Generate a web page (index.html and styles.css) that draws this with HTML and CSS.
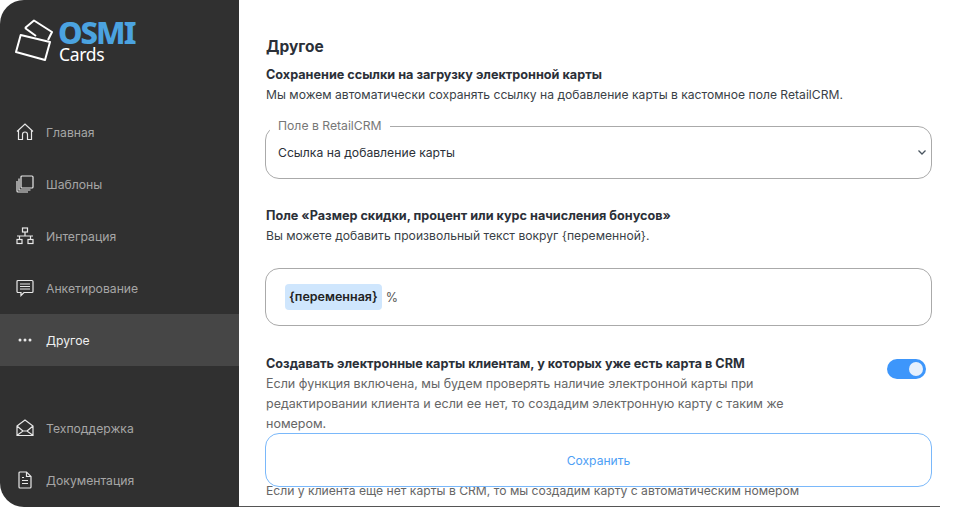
FILE: index.html
```html
<!DOCTYPE html>
<html lang="ru">
<head>
  <meta charset="UTF-8" />
  <meta name="viewport" content="width=device-width, initial-scale=1.0" />
  <title>OSMI Cards</title>
  <link rel="stylesheet" href="styles.css">
</head>
<body>
  <div class="app">
    <aside class="sidebar">
      <div class="logo">
        <svg class="logo-icon" width="38" height="42" viewBox="0 0 38 42" fill="none" stroke="#fff" stroke-width="2" stroke-linejoin="round">
          <path d="M10 9L19 1.500 37 13 33 21"/>
          <path d="M10 9l11 8"/>
          <path d="M5.700 16L35 23 30 41 1 33z"/>
        </svg>
        <div class="logo-text">
          <div class="logo-name">OSMI</div>
          <div class="logo-sub">Cards</div>
        </div>
      </div>
      <nav class="nav">
        <a class="nav-item">
          <svg class="nav-icon" viewBox="0 0 18 18"><path d="M1 8.500L9 1l8 7.500M2.500 7.500V16.500H6.500V11.500a2.500 2.500 0 0 1 5 0V16.500H15.500V7.500"/></svg>
          <span>Главная</span>
        </a>
        <a class="nav-item">
          <svg class="nav-icon" viewBox="0 0 18 18"><rect x="5" y="1" width="12" height="12" rx="1"/><path d="M3 3.500V15h11.500M1 6v10a1 1 0 0 0 1 1h10"/></svg>
          <span>Шаблоны</span>
        </a>
        <a class="nav-item">
          <svg class="nav-icon" viewBox="0 0 18 18"><rect x="6.500" y="1" width="5" height="4"/><rect x="1" y="12.500" width="5" height="4"/><rect x="12" y="12.500" width="5" height="4"/><path d="M9 5v4M3.500 12.500V9h11v3.500M9 9H1M9 9h8"/></svg>
          <span>Интеграция</span>
        </a>
        <a class="nav-item">
          <svg class="nav-icon" viewBox="0 0 18 18"><path d="M2 1.500h14a1 1 0 0 1 1 1v10a1 1 0 0 1-1 1H8l-3 3v-3H2a1 1 0 0 1-1-1v-10a1 1 0 0 1 1-1z"/><path d="M4 5h10M4 7.500h10M4 10h10"/></svg>
          <span>Анкетирование</span>
        </a>
        <a class="nav-item active">
          <svg class="nav-icon dots" viewBox="0 0 18 18"><circle cx="4" cy="9" r="1.500"/><circle cx="9" cy="9" r="1.500"/><circle cx="14" cy="9" r="1.500"/></svg>
          <span>Другое</span>
        </a>
        <a class="nav-item nav-gap">
          <svg class="nav-icon" viewBox="0 0 18 18"><path d="M1 7L9 1l8 6v9.500H1zM1 7l6 5M17 7l-6 5M1.500 16l5.500-4h4l5.500 4"/></svg>
          <span>Техподдержка</span>
        </a>
        <a class="nav-item">
          <svg class="nav-icon" viewBox="0 0 18 18"><path d="M3 2a1 1 0 0 1 1-1h6.500L15 5.500V16a1 1 0 0 1-1 1H4a1 1 0 0 1-1-1z"/><path d="M10.500 1v4.500H15M6 6.500h2M6 9.500h6M6 12.500h6"/></svg>
          <span>Документация</span>
        </a>
      </nav>
    </aside>

    <main class="main">
      <h1 class="page-title">Другое</h1>

      <section class="block">
        <h2 class="block-title">Сохранение ссылки на загрузку электронной карты</h2>
        <p class="block-text">Мы можем автоматически сохранять ссылку на добавление карты в кастомное поле RetailCRM.</p>
        <fieldset class="field">
          <legend>Поле в RetailCRM</legend>
          <div class="select">
            <span>Ссылка на добавление карты</span>
            <svg width="8" height="5" viewBox="0 0 8 5" fill="none" stroke="#4a5560" stroke-width="1.300"><path d="M.5.500L4 4 7.500.500"/></svg>
          </div>
        </fieldset>
      </section>

      <section class="block discount">
        <h2 class="block-title">Поле «Размер скидки, процент или курс начисления бонусов»</h2>
        <p class="block-text">Вы можете добавить произвольный текст вокруг {переменной}.</p>
        <div class="template-box">
          <span class="chip">{переменная}</span>
          <span class="template-rest">%</span>
        </div>
      </section>

      <section class="block existing">
        <div class="switch-row">
          <div>
            <h2 class="block-title">Создавать электронные карты клиентам, у которых уже есть карта в CRM</h2>
            <p class="block-note">Если функция включена, мы будем проверять наличие электронной карты при редактировании клиента и если ее нет, то создадим электронную карту с таким же номером.</p>
          </div>
          <div class="toggle"><div class="toggle-knob"></div></div>
        </div>
        <p class="block-note wide">Если у клиента еще нет карты в CRM, то мы создадим карту с автоматическим номером</p>
      </section>

      <button class="save-btn">Сохранить</button>
    </main>
  </div>
</body>
</html>
```

FILE: styles.css
```css
* {
  box-sizing: border-box;
}
body {
  margin: 0;
  font-family: Inter, "Liberation Sans", sans-serif;
  background-color: white;
  color: #2b3038;
}
.app {
  display: flex;
  width: 960px;
  height: 507px;
  overflow: hidden;
}

/* sidebar */
.sidebar {
  width: 239px;
  height: 507px;
  flex-shrink: 0;
  background-color: #303030;
  border-radius: 24px 0 0 24px;
}
.logo {
  display: flex;
  height: 106px;
  padding: 19px 0 0 15px;
}
.logo-icon {
  margin-right: 5px;
}
.logo-text {
  color: white;
}
.logo-name {
  font-family: "Noto Sans", sans-serif;
  font-size: 31px;
  font-weight: 800;
  line-height: 27px;
  letter-spacing: -2px;
  color: #4ba3e0;
}
.logo-sub {
  font-family: "Noto Sans", sans-serif;
  font-size: 17.500px;
  line-height: 17px;
  letter-spacing: -0.300px;
  margin-left: 1px;
}
.nav {
  display: flex;
  flex-direction: column;
}
.nav-item {
  display: flex;
  align-items: center;
  height: 52px;
  padding-left: 16px;
  font-size: 12.200px;
  color: #a6a6a6;
}
.nav-item.active {
  background-color: #464646;
  color: #f0f0f0;
}
.nav-gap {
  margin-top: 36px;
}
.nav-icon {
  width: 18px;
  height: 18px;
  margin-right: 12px;
  fill: none;
  stroke: #e8e8e8;
  stroke-width: 1.200;
}
.nav-icon.dots {
  fill: #e8e8e8;
  stroke: none;
}

/* content */
.main {
  position: relative;
  width: 701px;
  height: 507px;
  padding: 37px 8px 0 26px;
  border-bottom: 1px solid #555;
  overflow: hidden;
}
.page-title,
.block-title,
.block-text,
.block-note {
  padding-left: 1px;
}
.page-title {
  margin: 0 0 8px;
  font-size: 15.500px;
  font-weight: 700;
  line-height: 20px;
}
.block-title {
  margin: 0;
  font-size: 12.650px;
  font-weight: 700;
  line-height: 20px;
}
.block-text {
  margin: 0;
  font-size: 12.130px;
  line-height: 20px;
  color: #3a3f47;
}
.block-note {
  margin: 0;
  max-width: 535px;
  font-size: 12.500px;
  line-height: 20px;
  color: #666;
}
.block-note.wide {
  max-width: none;
  margin-top: 47px;
  font-size: 12.150px;
}
.field {
  margin: 14px 0 0;
  padding: 0 5px 0 12px;
  height: 60px;
  border: 1px solid #aaa;
  border-radius: 14px;
}
.field legend {
  margin-left: -8px;
  padding: 0 8px;
  font-size: 12.200px;
  line-height: 14px;
  color: #777;
}
.select {
  display: flex;
  align-items: center;
  justify-content: space-between;
  height: 39px;
  font-size: 12.200px;
}
.discount {
  margin-top: 27px;
}
.template-box {
  display: flex;
  align-items: center;
  height: 58px;
  margin-top: 22px;
  padding-left: 19px;
  border: 1px solid #aaa;
  border-radius: 14px;
  font-size: 12.500px;
}
.chip {
  padding: 0 4px;
  height: 26px;
  line-height: 26px;
  font-weight: 600;
  color: #222;
  background-color: #cfe6fd;
  border-radius: 4px;
}
.template-rest {
  margin-left: 4px;
  color: #555;
}
.existing {
  margin-top: 28px;
}
.switch-row {
  display: flex;
  justify-content: space-between;
  padding-right: 6px;
}
.toggle {
  display: flex;
  align-items: center;
  justify-content: flex-end;
  width: 39px;
  height: 20px;
  margin-top: 5px;
  padding-right: 3px;
  background-color: #3d96fb;
  border-radius: 10px;
}
.toggle-knob {
  width: 14px;
  height: 14px;
  background-color: #e6f0fd;
  border-radius: 50%;
}
.save-btn {
  position: absolute;
  left: 26px;
  right: 8px;
  bottom: 19px;
  height: 54px;
  padding-top: 2px;
  font-family: inherit;
  font-size: 12.100px;
  color: #4da0f5;
  background-color: white;
  border: 1px solid #7ab8fa;
  border-radius: 14px;
}
```
